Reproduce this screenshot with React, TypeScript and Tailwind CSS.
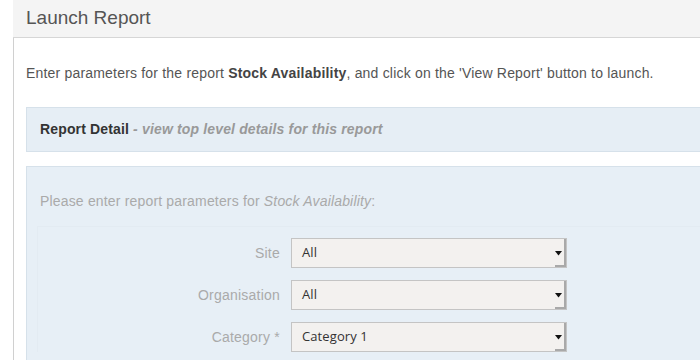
import React from "react";

function Select({ value }: { value: string }) {
  return (
    <div className="relative w-[276px] h-[30px] bg-[#f3f1ef] border border-[#c4c4c4] flex items-center pl-[10px] text-[13px] tracking-[0.1px] text-[#333] font-[family-name:Open_Sans,sans-serif]">
      <span>{value}</span>
      <div className="absolute right-0 top-0 bottom-0 w-[11px] border-r-2 border-b-2 border-[#a9a9a9]" />
      <svg className="absolute right-[4px] top-[12px]" width="7" height="5" viewBox="0 0 7 5">
        <polygon points="0,0 7,0 3.5,4.5" fill="#111" />
      </svg>
    </div>
  );
}

function Row({ label, value }: { label: string; value: string }) {
  return (
    <div className="flex items-center h-[30px]">
      <div className="w-[239px] text-right text-[14px] tracking-[0.22px] text-[#aaa]">{label}</div>
      <div className="ml-[11px]">
        <Select value={value} />
      </div>
    </div>
  );
}

export default function App() {
  return (
    <div className="w-[700px] h-[360px] overflow-hidden bg-white font-[family-name:Liberation_Sans,Arial,sans-serif]">
      <div className="ml-[13px]">
        <div className="h-[38px] bg-[#f4f4f4] border-b border-[#d6d6d6] pl-[13px] flex items-center text-[19px] text-[#555]">
          Launch Report
        </div>
        <div className="border-l border-[#d0d0d0] pl-[12px] h-[322px]">
          <div className="pt-[25px] text-[14px] leading-[20px] tracking-[0.19px] text-[#555] whitespace-nowrap">
            Enter parameters for the report <b className="text-[#444]">Stock Availability</b>, and click on the 'View Report' button to launch.
          </div>
          <div className="mt-[24px] h-[45px] bg-[#e6eef5] border border-r-0 border-[#d6e1ea] pl-[13px] flex items-center text-[14px] tracking-[0.15px] whitespace-nowrap">
            <b className="text-[#333]">Report Detail</b>
            <i className="font-bold text-[#999]">&nbsp;- view top level details for this report</i>
          </div>
          <div className="mt-[14px] h-[200px] bg-[#e7eff6] border border-r-0 border-b-0 border-[#d6e1ea] pl-[13px] pt-[24px]">
            <div className="text-[14px] leading-[20px] tracking-[0.17px] text-[#aaa] whitespace-nowrap">
              Please enter report parameters for <i>Stock Availability</i>:
            </div>
            <div className="mt-[15px] -ml-[3px] border border-r-0 border-b-0 border-[#e3ebf2] pt-[11px] pl-[3px]">
              <div className="flex flex-col gap-[12px]">
                <Row label="Site" value="All" />
                <Row label="Organisation" value="All" />
                <Row label="Category *" value="Category 1" />
              </div>
            </div>
          </div>
        </div>
      </div>
    </div>
  );
}
